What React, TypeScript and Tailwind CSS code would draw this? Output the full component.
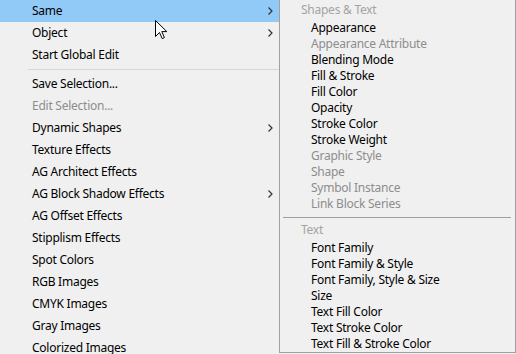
import { Fragment } from 'react';

type MainItem = { label: string; sub?: boolean; disabled?: boolean; active?: boolean; sep?: boolean };

const mainItems: MainItem[] = [
  { label: 'Same', sub: true, active: true },
  { label: 'Object', sub: true },
  { label: 'Start Global Edit' },
  { label: '', sep: true },
  { label: 'Save Selection...' },
  { label: 'Edit Selection...', disabled: true },
  { label: 'Dynamic Shapes', sub: true },
  { label: 'Texture Effects' },
  { label: 'AG Architect Effects' },
  { label: 'AG Block Shadow Effects', sub: true },
  { label: 'AG Offset Effects' },
  { label: 'Stipplism Effects' },
  { label: 'Spot Colors' },
  { label: 'RGB Images' },
  { label: 'CMYK Images' },
  { label: 'Gray Images' },
  { label: 'Colorized Images' },
];

const sections = [
  {
    title: 'Shapes & Text',
    items: [
      { label: 'Appearance' },
      { label: 'Appearance Attribute', disabled: true },
      { label: 'Blending Mode' },
      { label: 'Fill & Stroke' },
      { label: 'Fill Color' },
      { label: 'Opacity' },
      { label: 'Stroke Color' },
      { label: 'Stroke Weight' },
      { label: 'Graphic Style', disabled: true },
      { label: 'Shape', disabled: true },
      { label: 'Symbol Instance', disabled: true },
      { label: 'Link Block Series', disabled: true },
    ],
  },
  {
    title: 'Text',
    items: [
      { label: 'Font Family' },
      { label: 'Font Family & Style' },
      { label: 'Font Family, Style & Size' },
      { label: 'Size' },
      { label: 'Text Fill Color' },
      { label: 'Text Stroke Color' },
      { label: 'Text Fill & Stroke Color' },
    ],
  },
];

const Chevron = () => (
  <svg width="5" height="8" viewBox="0 0 5 8" className="absolute left-[268px] top-[7px]">
    <path d="M0.5 0.5 L4 4 L0.5 7.5" fill="none" stroke="#333" strokeWidth="1.2" />
  </svg>
);

const Cursor = () => (
  <svg width="13" height="20" viewBox="0 0 13 20" className="absolute left-[155px] top-[20px]">
    <path d="M0.5 0.5 L0.5 16.5 L4.5 12.5 L7.2 18.6 L9.4 17.6 L6.8 11.6 L11.8 11.6 Z" fill="#fff" stroke="#000" strokeWidth="1" />
  </svg>
);

export default function App() {
  return (
    <div className="relative flex w-[516px] h-[354px] overflow-hidden bg-[#f0f0f0] text-[12px] tracking-[-0.25px] text-black font-['Segoe_UI','Noto_Sans',sans-serif]">
      {/* main menu */}
      <div className="w-[279px] shrink-0 flex flex-col">
        {mainItems.map((it, i) =>
          it.sep ? (
            <div key={i} className="h-[7px] shrink-0 flex items-center pl-[28px]">
              <div className="h-px w-full bg-[#d7d7d7]" />
            </div>
          ) : (
            <div
              key={i}
              className={`relative h-[22px] shrink-0 flex items-center pl-[32px] leading-[16px] ${
                it.active ? 'bg-[#91c9f7]' : ''
              } ${it.disabled ? 'text-[#8d8d8d]' : ''}`}
            >
              {it.label}
              {it.sub && <Chevron />}
            </div>
          )
        )}
      </div>

      {/* submenu */}
      <div className="w-[237px] h-[353px] shrink-0 flex flex-col pt-[2px] border-l border-r border-b border-[#a0a0a0] bg-[#f0f0f0]">
        {sections.map((s, si) => (
          <Fragment key={s.title}>
            {si > 0 && (
              <div className="h-[10px] shrink-0 flex items-center pl-[3px] pr-[4px]">
                <div className="h-px w-full bg-[#a0a0a0]" />
              </div>
            )}
            <div className="h-[18px] shrink-0 pl-[21px] leading-[16px] text-[#a3a3a3]">{s.title}</div>
            {s.items.map((it) => (
              <div
                key={it.label}
                className={`h-[16px] shrink-0 pl-[31px] leading-[16px] ${it.disabled ? 'text-[#8d8d8d]' : ''}`}
              >
                {it.label}
              </div>
            ))}
          </Fragment>
        ))}
      </div>

      <Cursor />
    </div>
  );
}
